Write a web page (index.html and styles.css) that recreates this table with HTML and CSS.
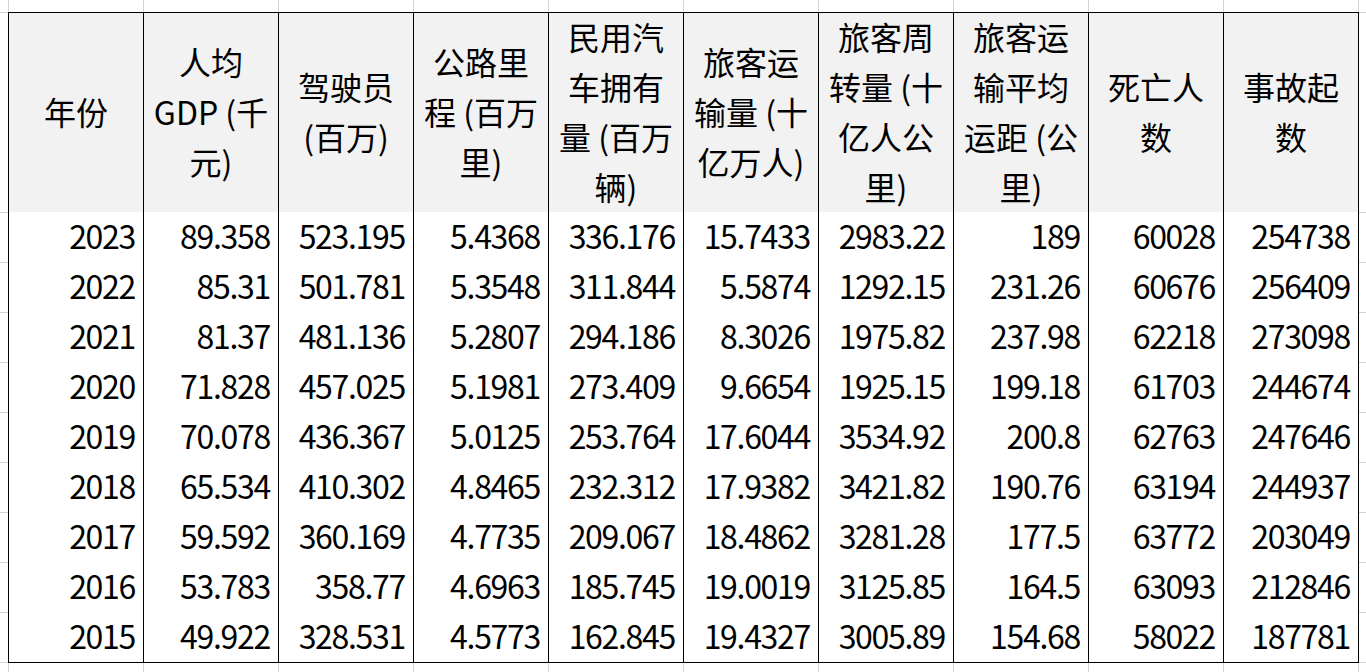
FILE: index.html
```html
<!DOCTYPE html>
<html lang="zh-CN">
<head>
<meta charset="utf-8">
<title>交通数据</title>
<link rel="stylesheet" href="styles.css">
</head>
<body>
<table class="sheet">
  <thead>
    <tr>
      <th><div class="hd">年份</div></th>
      <th><div class="hd">人均GDP (千元)</div></th>
      <th><div class="hd">驾驶员 (百万)</div></th>
      <th><div class="hd">公路里程 (百万里)</div></th>
      <th><div class="hd">民用汽车拥有量 (百万辆)</div></th>
      <th><div class="hd">旅客运输量 (十亿万人)</div></th>
      <th><div class="hd">旅客周转量 (十亿人公里)</div></th>
      <th><div class="hd">旅客运输平均运距 (公里)</div></th>
      <th><div class="hd">死亡人数</div></th>
      <th><div class="hd">事故起数</div></th>
    </tr>
  </thead>
  <tbody>
    <tr><td>2023</td><td>89.358</td><td>523.195</td><td>5.4368</td><td>336.176</td><td>15.7433</td><td>2983.22</td><td>189</td><td>60028</td><td>254738</td></tr>
    <tr><td>2022</td><td>85.31</td><td>501.781</td><td>5.3548</td><td>311.844</td><td>5.5874</td><td>1292.15</td><td>231.26</td><td>60676</td><td>256409</td></tr>
    <tr><td>2021</td><td>81.37</td><td>481.136</td><td>5.2807</td><td>294.186</td><td>8.3026</td><td>1975.82</td><td>237.98</td><td>62218</td><td>273098</td></tr>
    <tr><td>2020</td><td>71.828</td><td>457.025</td><td>5.1981</td><td>273.409</td><td>9.6654</td><td>1925.15</td><td>199.18</td><td>61703</td><td>244674</td></tr>
    <tr><td>2019</td><td>70.078</td><td>436.367</td><td>5.0125</td><td>253.764</td><td>17.6044</td><td>3534.92</td><td>200.8</td><td>62763</td><td>247646</td></tr>
    <tr><td>2018</td><td>65.534</td><td>410.302</td><td>4.8465</td><td>232.312</td><td>17.9382</td><td>3421.82</td><td>190.76</td><td>63194</td><td>244937</td></tr>
    <tr><td>2017</td><td>59.592</td><td>360.169</td><td>4.7735</td><td>209.067</td><td>18.4862</td><td>3281.28</td><td>177.5</td><td>63772</td><td>203049</td></tr>
    <tr><td>2016</td><td>53.783</td><td>358.77</td><td>4.6963</td><td>185.745</td><td>19.0019</td><td>3125.85</td><td>164.5</td><td>63093</td><td>212846</td></tr>
    <tr><td>2015</td><td>49.922</td><td>328.531</td><td>4.5773</td><td>162.845</td><td>19.4327</td><td>3005.89</td><td>154.68</td><td>58022</td><td>187781</td></tr>
  </tbody>
</table>
</body>
</html>
```

FILE: styles.css
```css
html, body {
  margin: 0;
  height: 100%;
}
body {
  padding: 12px 0 0 8px;
  box-sizing: border-box;
  background-color: #ffffff;
  background-image:
    linear-gradient(#d4d4d4, #d4d4d4),
    repeating-linear-gradient(to bottom, #d4d4d4 0 1px, transparent 1px 50px),
    repeating-linear-gradient(to right, #d4d4d4 0 1px, transparent 1px 135px);
  background-size: 100% 1px, 100% 501px, 100% 100%;
  background-position: 0 12px, 0 212px, 8px 0;
  background-repeat: no-repeat, no-repeat, no-repeat;
  font-family: "Noto Sans CJK SC", "Noto Sans", sans-serif;
  color: #000000;
  overflow: hidden;
}
.sheet {
  border-collapse: collapse;
  table-layout: fixed;
  width: 1351px;
  border: 1px solid #000000;
  font-size: 32px;
}
.sheet th {
  height: 199px;
  padding: 0 5px;
  background: #f2f2f2;
  font-weight: normal;
  line-height: 50px;
  text-align: center;
  vertical-align: middle;
  border-left: 1px solid #000000;
  border-right: 1px solid #000000;
}
.hd {
  margin-top: -4px;
}
.sheet td {
  height: 46px;
  padding: 0 8px 4px 0;
  line-height: 46px;
  letter-spacing: -1.3px;
  text-align: right;
  vertical-align: middle;
  white-space: nowrap;
  border-left: 1px solid #000000;
  border-right: 1px solid #000000;
  background: #ffffff;
}
```
